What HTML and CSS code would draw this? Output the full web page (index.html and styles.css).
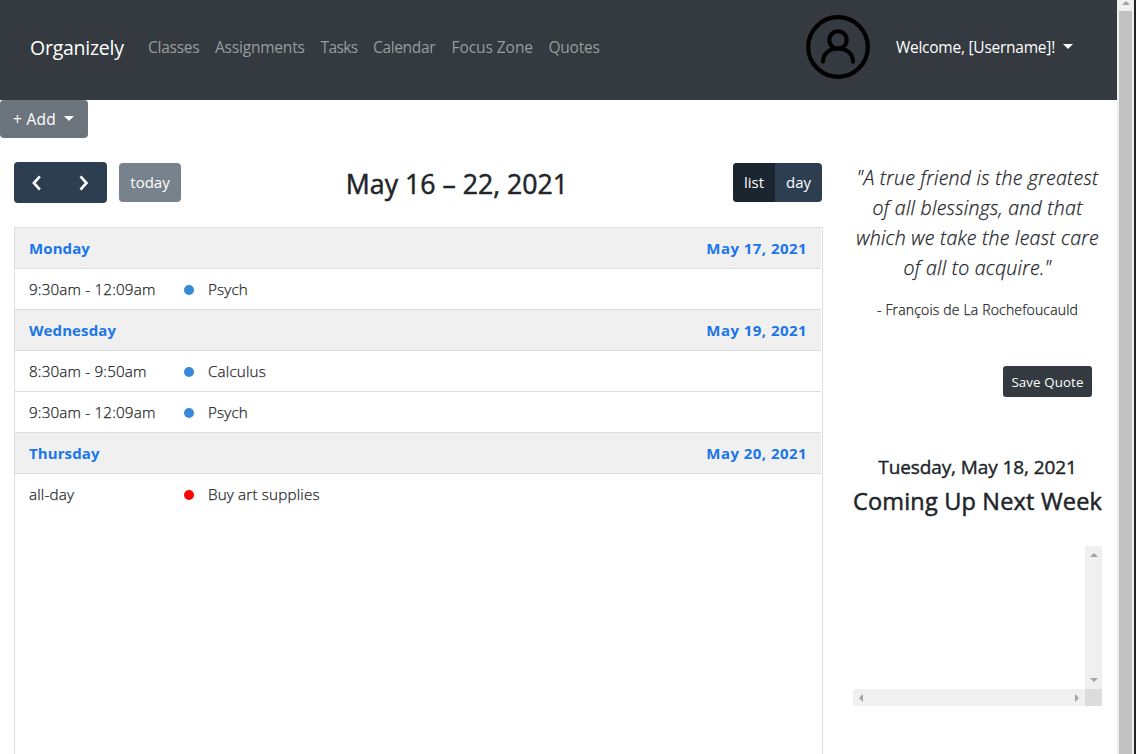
FILE: index.html
```html
<!DOCTYPE html>
<html lang="en">
<head>
<meta charset="utf-8">
<title>Organizely</title>
<link rel="stylesheet" href="styles.css">
</head>
<body>
<div class="window">
  <div class="page">
    <header class="navbar">
      <a class="brand">Organizely</a>
      <nav class="nav">
        <a class="nav-classes">Classes</a>
        <a class="nav-assignments">Assignments</a>
        <a class="nav-tasks">Tasks</a>
        <a class="nav-calendar">Calendar</a>
        <a class="nav-focus">Focus Zone</a>
        <a class="nav-quotes">Quotes</a>
      </nav>
      <svg class="avatar" viewBox="0 0 64 64" fill="none" stroke="#000" stroke-linecap="round">
        <circle cx="32" cy="32" r="29.800" stroke-width="4.200"/>
        <circle cx="32" cy="24.900" r="8.700" stroke-width="4"/>
        <path d="M17 46.800C17 38.500 23.500 33.600 32 33.600S47 38.500 47 46.800" stroke-width="4"/>
      </svg>
      <a class="welcome"><span>Welcome, [Username]!</span><i class="caret"></i></a>
    </header>
    <button class="add"><span>+ Add</span><i class="caret"></i></button>
    <div class="content">
      <main class="calendar">
        <div class="toolbar">
          <div class="toolbar-left">
            <div class="arrows">
              <svg viewBox="0 0 16 16" class="chevron"><path d="M10.300 2.700L5.500 8l4.800 5.300"/></svg>
              <svg viewBox="0 0 16 16" class="chevron"><path d="M6 2.700L10.800 8L6 13.300"/></svg>
            </div>
            <button class="today">today</button>
          </div>
          <h2 class="title">May 16 – 22, 2021</h2>
          <div class="views"><span class="view active">list</span><span class="view">day</span></div>
        </div>
        <div class="list">
          <div class="day"><span>Monday</span><span class="date">May 17, 2021</span></div>
          <div class="event"><span class="time">9:30am - 12:09am</span><i class="dot"></i><span>Psych</span></div>
          <div class="day"><span>Wednesday</span><span class="date">May 19, 2021</span></div>
          <div class="event"><span class="time">8:30am - 9:50am</span><i class="dot"></i><span>Calculus</span></div>
          <div class="event"><span class="time">9:30am - 12:09am</span><i class="dot"></i><span>Psych</span></div>
          <div class="day"><span>Thursday</span><span class="date">May 20, 2021</span></div>
          <div class="event last"><span class="time">all-day</span><i class="dot red"></i><span>Buy art supplies</span></div>
        </div>
      </main>
      <aside class="side">
        <blockquote class="quote"><span>"A true friend is the greatest</span><span>of all blessings, and that</span><span>which we take the least care</span><span>of all to acquire."</span></blockquote>
        <p class="author">- François de La Rochefoucauld</p>
        <button class="save">Save Quote</button>
        <h3 class="today-date">Tuesday, May 18, 2021</h3>
        <h2 class="upcoming">Coming Up Next Week</h2>
        <div class="scrollbox">
          <div class="pane"></div>
          <div class="vbar"><i class="arrow up"></i><i class="arrow down"></i></div>
          <div class="hbar"><i class="arrow left"></i><i class="arrow right"></i></div>
          <div class="corner"></div>
        </div>
      </aside>
    </div>
  </div>
  <div class="scrollbar"><i class="arrow up"></i><div class="thumb"></div></div>
</div>
</body>
</html>
```
FILE: styles.css
```css
* { box-sizing: border-box; }
body {
  margin: 0;
  overflow: hidden;
  background: #fff;
  color: #212529;
  font: 16px/24px "Open Sans", "Noto Sans", sans-serif;
}
h2, h3, p, blockquote { margin: 0; font-weight: 400; }
button { font: inherit; border: 0; color: #fff; }
a, span, button, h2, h3, p { white-space: nowrap; }
.window { display: flex; width: 1136px; height: 754px; overflow: hidden; }
.page { width: 1117px; flex: none; }

.navbar { display: flex; align-items: center; height: 100px; padding: 0 44px 6px 30px; background: #343a40; color: #fff; }
.brand { width: 110px; font-size: 19.5px; letter-spacing: -0.25px; padding-top: 2px; }
.nav { display: flex; gap: 16px; margin-left: 8px; color: #999c9f; font-size: 15.5px; }
.nav-classes { width: 51px; letter-spacing: -0.26px; }
.nav-assignments { width: 89.5px; letter-spacing: -0.2px; }
.nav-tasks { width: 36.5px; letter-spacing: -0.6px; }
.nav-calendar { width: 62.5px; letter-spacing: -0.35px; }
.nav-focus { width: 81px; letter-spacing: -0.06px; }
.nav-quotes { letter-spacing: -0.22px; }
.avatar { width: 64px; height: 64px; margin-left: auto; }
.welcome { display: flex; align-items: center; margin-left: 26px; font-size: 15.5px; letter-spacing: -0.24px; }
.caret { width: 0; height: 0; border: 5px solid transparent; border-top-color: currentColor; border-bottom: 0; margin: -2px 0 0 8px; }

.add { display: flex; align-items: center; width: 88px; height: 38px; padding: 0 12px 0 13px; border-radius: 4px; background: #6c757d; font-size: 15.5px; letter-spacing: 0.3px; }

.content { display: flex; padding: 24px 15px 0 14px; }
.calendar { width: 809px; flex: none; }
.toolbar { display: flex; align-items: center; justify-content: space-between; height: 41px; margin-bottom: 24px; padding-right: 1px; }
.toolbar-left { display: flex; align-items: center; gap: 12px; }
.arrows { display: flex; align-items: center; justify-content: space-between; width: 93px; height: 41px; padding: 0 14px 0 13px; border-radius: 4px; background: #2c3e50; }
.chevron { width: 20px; height: 20px; fill: none; stroke: #fff; stroke-width: 2.1; }
.today { width: 62px; height: 39px; padding: 0 0 2px; border-radius: 4px; background: #78828c; font-size: 15px; }
.title { font-size: 26.7px; line-height: 34px; padding-top: 2px; -webkit-text-stroke: 0.5px; }
.views { display: flex; height: 39px; border-radius: 4px; overflow: hidden; background: #2c3e50; color: #fff; font-size: 15px; line-height: 39px; text-align: center; }
.view { width: 47px; }
.view.active { width: 42px; background: #1a252f; }

.list { height: 600px; padding-right: 1px; border: 1px solid #ddd; font-size: 15px; }
.day, .event { display: flex; align-items: center; height: 41px; padding: 0 14px; border-bottom: 1px solid #ddd; }
.day { justify-content: space-between; background: #f0f0f0; color: #1a76ea; font-weight: 700; letter-spacing: 0.1px; }
.date { letter-spacing: 0.45px; }
.event.last { height: 40px; border-bottom: 0; }
.event { font-size: 15.2px; font-weight: 300; letter-spacing: 0.18px; -webkit-text-stroke: 0.25px; }
.time { width: 155px; }
.dot { width: 10px; height: 10px; margin: 1px 14px 0 0; border-radius: 50%; background: #3788d8; }
.dot.red { background: #f00; }

.side { display: flex; flex-direction: column; width: 249px; margin-left: 30px; text-align: center; }
.quote { display: flex; flex-direction: column; align-items: center; font-size: 19.5px; line-height: 30px; font-style: italic; font-weight: 300; letter-spacing: 0.27px; padding-top: 1px; -webkit-text-stroke: 0.25px; }
.author { margin-top: 15px; font-size: 14px; font-weight: 300; letter-spacing: 0.17px; -webkit-text-stroke: 0.25px; }
.save { align-self: flex-end; width: 89px; height: 31px; margin: 44px 10px 0 0; padding: 0; border-radius: 3px; background: #343a40; font-size: 13.3px; letter-spacing: 0.12px; }
.today-date { margin-top: 58px; font-size: 19px; letter-spacing: -0.1px; -webkit-text-stroke: 0.4px; }
.upcoming { margin-top: 8px; font-size: 23.5px; line-height: 29px; letter-spacing: 0.18px; -webkit-text-stroke: 0.5px; }
.scrollbox { display: grid; grid-template: 143px 17px / 232px 17px; margin-top: 30px; }
.vbar, .hbar { display: flex; align-items: center; justify-content: space-between; background: #f0f0f0; }
.vbar { flex-direction: column; padding: 7px 0; }
.hbar { padding: 0 6px; }
.corner { background: #dcdcdc; }
.arrow { width: 0; height: 0; border: 4px solid transparent; }
.up { border-top: 0; border-bottom-color: #a3a3a3; }
.down { border-bottom: 0; border-top-color: #a3a3a3; }
.left { border-left: 0; border-right-color: #a3a3a3; }
.right { border-right: 0; border-left-color: #a3a3a3; }

.scrollbar { display: flex; flex-direction: column; align-items: center; width: 19px; padding-top: 1px; border-right: 2px solid #202429; background: #f0f0f0; }
.thumb { width: 13px; flex: 1; margin-top: 6px; background: #c1c1c1; }
```
